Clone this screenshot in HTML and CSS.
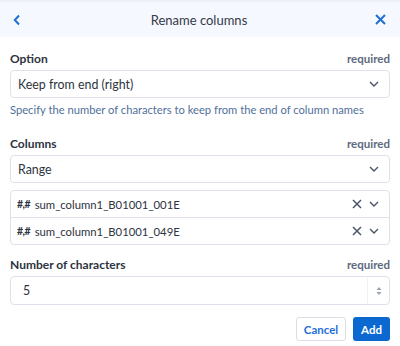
FILE: index.html
```html
<!DOCTYPE html>
<html lang="en">
<head>
  <meta charset="UTF-8" />
  <title>Rename columns</title>
  <link rel="stylesheet" href="styles.css">
</head>
<body>

  <!-- CABECERA -->
  <div class="cabecera">
    <button class="icono-btn">
      <svg width="8" height="12" viewBox="0 0 8 12"><path d="M6 1.5 L1.8 6 L6 10.5" fill="none" stroke="#1f6fd6" stroke-width="2"/></svg>
    </button>
    <h1>Rename columns</h1>
    <button class="icono-btn">
      <svg width="11" height="11" viewBox="0 0 11 11"><path d="M1 1 L10 10 M10 1 L1 10" fill="none" stroke="#1f6fd6" stroke-width="2"/></svg>
    </button>
  </div>

  <div class="formulario">
    <div class="campo">
      <div class="campo-cabecera">
        <label>Option</label>
        <span class="requerido">required</span>
      </div>
      <div class="selector">
        <span>Keep from end (right)</span>
        <svg class="flecha" width="10" height="6" viewBox="0 0 10 6"><path d="M1 1 L5 5 L9 1" fill="none" stroke="#4a5568" stroke-width="1.4"/></svg>
      </div>
      <p class="ayuda">Specify the number of characters to keep from the end of column names</p>
    </div>

    <div class="campo campo-columnas">
      <div class="campo-cabecera">
        <label>Columns</label>
        <span class="requerido">required</span>
      </div>
      <div class="selector">
        <span>Range</span>
        <svg class="flecha" width="10" height="6" viewBox="0 0 10 6"><path d="M1 1 L5 5 L9 1" fill="none" stroke="#4a5568" stroke-width="1.4"/></svg>
      </div>
      <div class="lista">
        <div class="fila">
          <span class="tipo">#<span class="coma">,</span>#</span>
          <span class="nombre">sum_column1_B01001_001E</span>
          <svg width="10" height="10" viewBox="0 0 10 10"><path d="M1 1 L9 9 M9 1 L1 9" fill="none" stroke="#4a5568" stroke-width="1.5"/></svg>
          <svg class="flecha" width="10" height="6" viewBox="0 0 10 6"><path d="M1 1 L5 5 L9 1" fill="none" stroke="#4a5568" stroke-width="1.4"/></svg>
        </div>
        <div class="fila">
          <span class="tipo">#<span class="coma">,</span>#</span>
          <span class="nombre">sum_column1_B01001_049E</span>
          <svg width="10" height="10" viewBox="0 0 10 10"><path d="M1 1 L9 9 M9 1 L1 9" fill="none" stroke="#4a5568" stroke-width="1.5"/></svg>
          <svg class="flecha" width="10" height="6" viewBox="0 0 10 6"><path d="M1 1 L5 5 L9 1" fill="none" stroke="#4a5568" stroke-width="1.4"/></svg>
        </div>
      </div>
    </div>

    <div class="campo campo-numero">
      <div class="campo-cabecera">
        <label>Number of characters</label>
        <span class="requerido">required</span>
      </div>
      <div class="numero">
        <span class="valor">5</span>
        <span class="giro">
          <svg width="6" height="10" viewBox="0 0 6 10"><path d="M0.5 4 L3 1 L5.5 4 Z M0.5 6 L3 9 L5.5 6 Z" fill="#9aa3b2"/></svg>
        </span>
      </div>
    </div>

    <div class="acciones">
      <button class="btn-cancelar">Cancel</button>
      <button class="btn-agregar">Add</button>
    </div>
  </div>

</body>
</html>
```

FILE: styles.css
```css
body {
  margin: 0;
  font-family: 'Lato', 'Liberation Sans', sans-serif;
  background-color: white;
  color: #2d3340;
}

.cabecera {
  display: flex;
  align-items: center;
  justify-content: space-between;
  height: 35px;
  padding: 0 12px 0 10px;
  background-color: #f5f8fe;
  border-top: 2px solid #eceff4;
}

.cabecera h1 {
  margin: 0;
  font-size: 13px;
  font-weight: normal;
  color: #333a47;
}

.icono-btn {
  display: flex;
  align-items: center;
  justify-content: center;
  width: 14px;
  height: 16px;
  padding: 0;
  background: none;
  border: none;
}

.formulario {
  padding: 13px 10px 0;
}

.campo-cabecera {
  display: flex;
  justify-content: space-between;
  align-items: center;
  height: 16px;
  margin-bottom: 4px;
}

.campo-cabecera label {
  font-size: 12px;
  font-weight: bold;
  color: #2d3340;
}

.requerido {
  font-size: 11.5px;
  font-weight: bold;
  color: #5e6a80;
}

.selector {
  display: flex;
  align-items: center;
  justify-content: space-between;
  height: 26px;
  padding: 0 10px 0 7px;
  border: 1px solid #dde2ea;
  border-radius: 4px;
  font-size: 12.4px;
  color: #2d3340;
}

.ayuda {
  margin: 5px 0 0;
  font-size: 11.2px;
  line-height: 14px;
  color: #50709c;
}

.campo-columnas {
  margin-top: 18px;
}

.lista {
  margin-top: 7px;
  border: 1px solid #dde2ea;
  border-radius: 4px;
}

.fila {
  display: flex;
  align-items: center;
  gap: 7px;
  height: 26px;
  padding: 0 10px 0 6px;
  font-size: 11.3px;
}

.fila + .fila {
  border-top: 1px solid #dde2ea;
}

.tipo {
  font-weight: bold;
  font-size: 10.5px;
  margin-right: -3px;
  color: #2d3340;
}

.coma {
  margin: 0 -0.5px;
}

.nombre {
  flex: 1;
}

.campo-numero {
  margin-top: 11px;
}

.numero {
  display: flex;
  align-items: center;
  height: 27px;
  border: 1px solid #dde2ea;
  border-radius: 4px;
  font-size: 12.4px;
}

.valor {
  flex: 1;
  padding-left: 12px;
}

.giro {
  display: flex;
  align-items: center;
  justify-content: center;
  width: 21px;
  height: 100%;
  border-left: 1px solid #f0f2f6;
}

.acciones {
  display: flex;
  justify-content: flex-end;
  gap: 7px;
  margin-top: 12px;
}

.acciones button {
  height: 24px;
  font-family: 'Lato', 'Liberation Sans', sans-serif;
  font-size: 11.5px;
  font-weight: bold;
  border-radius: 3px;
  cursor: pointer;
}

.btn-cancelar {
  width: 50px;
  background-color: white;
  color: #1f6fd6;
  border: 1px solid #d9dee7;
}

.btn-agregar {
  width: 37px;
  background-color: #0b68d0;
  color: white;
  border: none;
}
```
